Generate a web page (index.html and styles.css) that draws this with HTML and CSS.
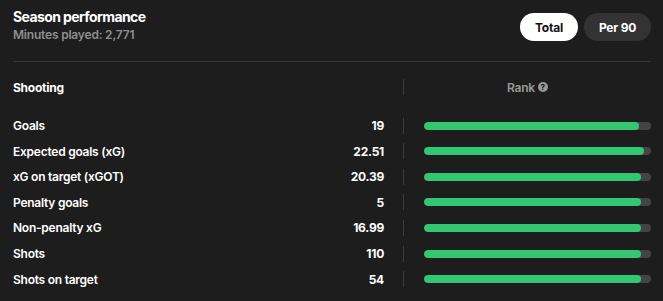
FILE: index.html
```html
<!DOCTYPE html>
<html>
<head>
<meta charset="utf-8">
<link rel="stylesheet" href="styles.css">
</head>
<body>
<section class="card">
  <header class="top">
    <div class="titles">
      <h2 class="title">Season performance</h2>
      <div class="subtitle">Minutes played: 2,771</div>
    </div>
    <div class="toggle">
      <button class="pill active">Total</button>
      <button class="pill">Per 90</button>
    </div>
  </header>
  <div class="divider"></div>
  <div class="row head">
    <div class="left"><span class="group">Shooting</span></div>
    <div class="sep"></div>
    <div class="right rank">Rank <span class="help">?</span></div>
  </div>
  <div class="rows">
    <div class="row"><div class="left"><span class="label">Goals</span><span class="val">19</span></div><div class="sep"></div><div class="right"><div class="track"><div class="fill" style="width:94.7%"></div></div></div></div>
    <div class="row"><div class="left"><span class="label">Expected goals (xG)</span><span class="val">22.51</span></div><div class="sep"></div><div class="right"><div class="track"><div class="fill" style="width:96.9%"></div></div></div></div>
    <div class="row"><div class="left"><span class="label">xG on target (xGOT)</span><span class="val">20.39</span></div><div class="sep"></div><div class="right"><div class="track"><div class="fill" style="width:95.6%"></div></div></div></div>
    <div class="row"><div class="left"><span class="label">Penalty goals</span><span class="val">5</span></div><div class="sep"></div><div class="right"><div class="track"><div class="fill" style="width:95.6%"></div></div></div></div>
    <div class="row"><div class="left"><span class="label">Non-penalty xG</span><span class="val">16.99</span></div><div class="sep"></div><div class="right"><div class="track"><div class="fill" style="width:95.6%"></div></div></div></div>
    <div class="row"><div class="left"><span class="label">Shots</span><span class="val">110</span></div><div class="sep"></div><div class="right"><div class="track"><div class="fill" style="width:95.6%"></div></div></div></div>
    <div class="row"><div class="left"><span class="label">Shots on target</span><span class="val">54</span></div><div class="sep"></div><div class="right"><div class="track"><div class="fill" style="width:95.6%"></div></div></div></div>
  </div>
</section>
</body>
</html>
```
FILE: styles.css
```css
html, body {
  margin: 0;
  padding: 0;
  background: #1d1d1d;
}
body {
  font-family: "Inter", "Lato", sans-serif;
  color: #ffffff;
  width: 663px;
  height: 301px;
  overflow: hidden;
}
.card {
  padding: 7px 12px 0 13px;
}
.top {
  display: flex;
  justify-content: space-between;
  align-items: flex-start;
  height: 54px;
}
.title {
  margin: 0;
  font-size: 14px;
  font-weight: 700;
  line-height: 20px;
  letter-spacing: -0.6px;
}
.subtitle {
  margin-top: 0;
  font-size: 12px;
  font-weight: 600;
  color: #8f8f8f;
  line-height: 16px;
  letter-spacing: -0.2px;
}
.toggle {
  display: flex;
  gap: 6px;
  margin-top: 6px;
}
.pill {
  border: none;
  height: 28px;
  border-radius: 14px;
  background: #333333;
  color: #ffffff;
  font-family: inherit;
  font-size: 12px;
  font-weight: 700;
  letter-spacing: -0.2px;
  padding: 0;
  width: 67px;
}
.pill.active {
  background: #ffffff;
  color: #111111;
  width: 58px;
}
.divider {
  height: 1px;
  background: #363636;
}
.row {
  display: flex;
  align-items: center;
  height: 25.55px;
}
.row.head {
  margin-top: 17px;
  height: 16px;
  margin-bottom: 18px;
}
.left {
  width: 371px;
  display: flex;
  justify-content: space-between;
  align-items: center;
  font-size: 12px;
  font-weight: 600;
  letter-spacing: -0.25px;
  flex-shrink: 0;
}
.group {
  font-weight: 700;
}
.val {
  font-weight: 700;
}
.sep {
  width: 1px;
  height: 16px;
  background: #3c3c3c;
  margin-left: 19px;
  flex-shrink: 0;
}
.right {
  flex: 1;
  margin-left: 20px;
}
.rank {
  margin-left: 0;
  display: flex;
  justify-content: center;
  align-items: center;
  gap: 3px;
  font-size: 12px;
  font-weight: 600;
  letter-spacing: -0.25px;
  color: #9a9a9a;
}
.help {
  width: 10px;
  height: 10px;
  border-radius: 50%;
  background: #9a9a9a;
  color: #1d1d1d;
  font-size: 8px;
  font-weight: 800;
  line-height: 10px;
  text-align: center;
  letter-spacing: 0;
}
.track {
  height: 8px;
  border-radius: 4px;
  background: #444444;
  overflow: hidden;
}
.fill {
  height: 8px;
  border-radius: 4px;
  background: #33c771;
}
```
